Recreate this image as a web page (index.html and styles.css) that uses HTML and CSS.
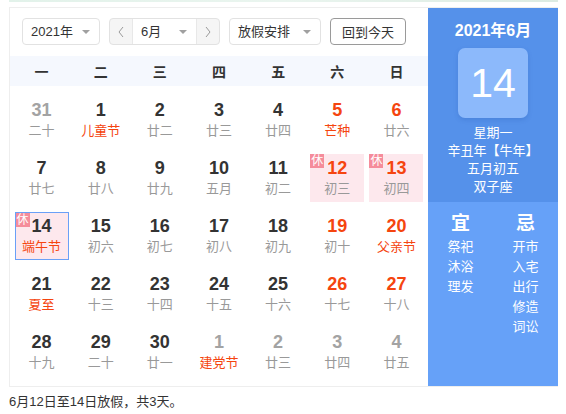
FILE: index.html
```html
<!DOCTYPE html>
<html lang="zh-CN">
<head>
<meta charset="utf-8">
<title>万年历</title>
<link rel="stylesheet" href="styles.css">
</head>
<body>
<div class="strip"></div>
<div class="cal">
  <div class="main">
    <div class="controls">
      <div class="select year"><span>2021年</span><i class="tri"></i></div>
      <div class="monthgroup">
        <div class="nav"><svg width="8" height="12" viewBox="0 0 8 12"><polyline points="6,1 2,6 6,11" fill="none" stroke="#999" stroke-width="1"/></svg></div>
        <div class="select month"><span>6月</span><i class="tri"></i></div>
        <div class="nav"><svg width="8" height="12" viewBox="0 0 8 12"><polyline points="2,1 6,6 2,11" fill="none" stroke="#999" stroke-width="1"/></svg></div>
      </div>
      <div class="select holiday"><span>放假安排</span><i class="tri"></i></div>
      <button class="today-btn">回到今天</button>
    </div>
    <div class="weekhead">
      <span>一</span><span>二</span><span>三</span><span>四</span><span>五</span><span>六</span><span>日</span>
    </div>
    <div class="days">
      <div class="cell other"><b>31</b><em>二十</em></div>
      <div class="cell fest"><b>1</b><em>儿童节</em></div>
      <div class="cell"><b>2</b><em>廿二</em></div>
      <div class="cell"><b>3</b><em>廿三</em></div>
      <div class="cell"><b>4</b><em>廿四</em></div>
      <div class="cell wk fest"><b>5</b><em>芒种</em></div>
      <div class="cell wk"><b>6</b><em>廿六</em></div>

      <div class="cell"><b>7</b><em>廿七</em></div>
      <div class="cell"><b>8</b><em>廿八</em></div>
      <div class="cell"><b>9</b><em>廿九</em></div>
      <div class="cell"><b>10</b><em>五月</em></div>
      <div class="cell"><b>11</b><em>初二</em></div>
      <div class="cell wk rest"><i class="badge">休</i><b>12</b><em>初三</em></div>
      <div class="cell wk rest"><i class="badge">休</i><b>13</b><em>初四</em></div>

      <div class="cell rest fest today"><i class="badge">休</i><b>14</b><em>端午节</em></div>
      <div class="cell"><b>15</b><em>初六</em></div>
      <div class="cell"><b>16</b><em>初七</em></div>
      <div class="cell"><b>17</b><em>初八</em></div>
      <div class="cell"><b>18</b><em>初九</em></div>
      <div class="cell wk"><b>19</b><em>初十</em></div>
      <div class="cell wk fest"><b>20</b><em>父亲节</em></div>

      <div class="cell fest"><b>21</b><em>夏至</em></div>
      <div class="cell"><b>22</b><em>十三</em></div>
      <div class="cell"><b>23</b><em>十四</em></div>
      <div class="cell"><b>24</b><em>十五</em></div>
      <div class="cell"><b>25</b><em>十六</em></div>
      <div class="cell wk"><b>26</b><em>十七</em></div>
      <div class="cell wk"><b>27</b><em>十八</em></div>

      <div class="cell"><b>28</b><em>十九</em></div>
      <div class="cell"><b>29</b><em>二十</em></div>
      <div class="cell"><b>30</b><em>廿一</em></div>
      <div class="cell other fest"><b>1</b><em>建党节</em></div>
      <div class="cell other"><b>2</b><em>廿三</em></div>
      <div class="cell other"><b>3</b><em>廿四</em></div>
      <div class="cell other"><b>4</b><em>廿五</em></div>
    </div>
  </div>
  <div class="side">
    <div class="side-top">
      <div class="ym">2021年6月</div>
      <div class="bigday">14</div>
      <div class="info">
        <p>星期一</p>
        <p>辛丑年【牛年】</p>
        <p>五月初五</p>
        <p>双子座</p>
      </div>
    </div>
    <div class="side-bottom">
      <div class="col">
        <div class="ttl">宜</div>
        <p>祭祀</p><p>沐浴</p><p>理发</p>
      </div>
      <div class="col">
        <div class="ttl">忌</div>
        <p>开市</p><p>入宅</p><p>出行</p><p>修造</p><p>词讼</p>
      </div>
    </div>
  </div>
</div>
<p class="footer">6月12日至14日放假，共3天。</p>
</body>
</html>
```

FILE: styles.css
```css
* { box-sizing: border-box; }
body {
  margin: 0;
  font-family: "Liberation Sans", Arial, "Noto Sans CJK SC", sans-serif;
  color: #333;
  background: #fff;
}
.strip {
  margin-left: 9px;
  width: 549px;
  height: 2px;
  background: linear-gradient(90deg, #e2f2ea, #eaf5ef 50%, #dcebe2);
}
.cal {
  display: flex;
  margin: 5px 0 0 9px;
  width: 549px;
  border: 1px solid #eeeeee;
  border-right: 0;
}
.main {
  width: 418px;
}
.controls {
  display: flex;
  align-items: center;
  gap: 9px;
  padding: 10px 0 0 12px;
  height: 37px;
}
.select {
  position: relative;
  display: flex;
  align-items: center;
  height: 27px;
  border: 1px solid #e2e2e2;
  border-radius: 4px;
  font-size: 13px;
  padding-left: 8px;
  background: #fff;
}
.select span { line-height: 25px; }
.tri {
  position: absolute;
  right: 9px;
  top: 11px;
  width: 0;
  height: 0;
  border-left: 4px solid transparent;
  border-right: 4px solid transparent;
  border-top: 4px solid #a0a0a0;
}
.year { width: 78px; }
.holiday { width: 92px; }
.monthgroup {
  display: flex;
  height: 27px;
  border: 1px solid #e2e2e2;
  border-radius: 4px;
  background: #f5f5f5;
  overflow: hidden;
}
.nav {
  width: 22px;
  display: flex;
  align-items: center;
  justify-content: center;
}
.month {
  width: 65px;
  height: 25px;
  border: 0;
  border-left: 1px solid #e8e8e8;
  border-right: 1px solid #e8e8e8;
  border-radius: 0;
}
.today-btn {
  width: 76px;
  height: 27px;
  border: 1px solid #9a9a9a;
  border-radius: 4px;
  background: #fff;
  font-family: inherit;
  font-size: 13px;
  color: #333;
  padding: 0;
}
.weekhead {
  display: grid;
  grid-template-columns: repeat(7, 1fr);
  margin-top: 11px;
  padding: 0 2px;
  height: 30px;
  background: #f5f8fe;
  align-items: center;
  font-size: 14px;
  font-weight: bold;
  text-align: center;
}
.days {
  display: grid;
  grid-template-columns: repeat(7, 1fr);
  grid-auto-rows: 48px;
  row-gap: 10px;
  padding: 10px 2px;
  justify-items: center;
}
.cell {
  position: relative;
  width: 54px;
  height: 48px;
  text-align: center;
}
.cell b {
  display: block;
  padding-top: 4px;
  font-size: 18px;
  line-height: 20px;
  font-weight: bold;
  color: #333;
}
.cell em {
  display: block;
  font-style: normal;
  font-size: 13px;
  line-height: 22px;
  color: #999;
}
.cell.wk b { color: #f5450f; }
.cell.fest em { color: #f5450f; }
.cell.other b { color: #a3a3a3; }
.cell.rest { background: #fde8ed; }
.cell.today { border: 1px solid #6aa0f7; }
.cell.today b { padding-top: 3px; }
.badge {
  position: absolute;
  left: 0;
  top: 0;
  width: 14px;
  height: 14px;
  background: #f58c9b;
  color: #fff;
  font-style: normal;
  font-size: 12px;
  line-height: 14px;
  text-align: center;
}
.side {
  width: 130px;
  display: flex;
  flex-direction: column;
  color: #fff;
}
.side-top {
  background: #5591ea;
  padding: 14px 0 6px;
  display: flex;
  flex-direction: column;
  align-items: center;
  height: 194px;
}
.ym {
  font-size: 16px;
  font-weight: bold;
  line-height: 18px;
}
.bigday {
  margin-top: 8px;
  width: 70px;
  height: 70px;
  border-radius: 7px;
  background: #8cb9fb;
  box-shadow: 0 2px 4px rgba(40, 90, 180, 0.25);
  font-size: 41px;
  line-height: 70px;
  text-align: center;
}
.info {
  margin-top: 6px;
  text-align: center;
}
.info p, .col p {
  margin: 0;
  font-size: 13px;
  line-height: 18px;
}
.side-bottom {
  flex: 1;
  background: #66a1f8;
  display: flex;
  padding-top: 11px;
}
.col {
  flex: 1;
  text-align: center;
}
.ttl {
  font-size: 19px;
  font-weight: bold;
  line-height: 22px;
  margin-bottom: 2px;
}
.col p { line-height: 20px; }
.footer {
  margin: 7px 0 0 9px;
  font-size: 13px;
  line-height: 16px;
  color: #333;
}
```
